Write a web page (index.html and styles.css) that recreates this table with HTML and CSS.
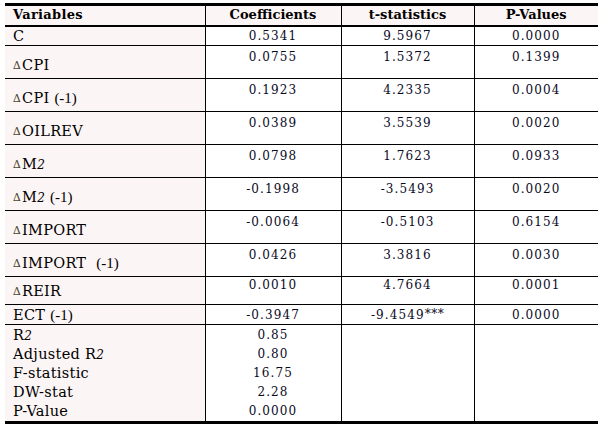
FILE: index.html
```html
<!DOCTYPE html>
<html>
<head>
<meta charset="utf-8">
<link rel="stylesheet" href="styles.css">
</head>
<body>
<table class="reg">
  <colgroup>
    <col class="c1"><col class="c2"><col class="c3"><col class="c4">
  </colgroup>
  <thead>
    <tr class="head">
      <th class="lab">Variables</th>
      <th>Coefficients</th>
      <th>t-statistics</th>
      <th>P-Values</th>
    </tr>
  </thead>
  <tbody>
    <tr class="short">
      <td class="lab">C</td>
      <td class="num">0.5341</td><td class="num">9.5967</td><td class="num">0.0000</td>
    </tr>
    <tr class="tall">
      <td class="lab"><span class="d">∆</span>CPI</td>
      <td class="num">0.0755</td><td class="num">1.5372</td><td class="num">0.1399</td>
    </tr>
    <tr class="tall">
      <td class="lab"><span class="d">∆</span>CPI <span class="lag">(-1)</span></td>
      <td class="num">0.1923</td><td class="num">4.2335</td><td class="num">0.0004</td>
    </tr>
    <tr class="tall">
      <td class="lab"><span class="d">∆</span>OILREV</td>
      <td class="num">0.0389</td><td class="num">3.5539</td><td class="num">0.0020</td>
    </tr>
    <tr class="tall">
      <td class="lab"><span class="d">∆</span>M<span class="two">2</span></td>
      <td class="num">0.0798</td><td class="num">1.7623</td><td class="num">0.0933</td>
    </tr>
    <tr class="tall">
      <td class="lab"><span class="d">∆</span>M<span class="two">2</span> <span class="lag">(-1)</span></td>
      <td class="num">-0.1998</td><td class="num">-3.5493</td><td class="num">0.0020</td>
    </tr>
    <tr class="tall">
      <td class="lab"><span class="d">∆</span>IMPORT</td>
      <td class="num">-0.0064</td><td class="num">-0.5103</td><td class="num">0.6154</td>
    </tr>
    <tr class="tall">
      <td class="lab"><span class="d">∆</span>IMPORT &nbsp;<span class="lag">(-1)</span></td>
      <td class="num">0.0426</td><td class="num">3.3816</td><td class="num">0.0030</td>
    </tr>
    <tr class="mid">
      <td class="lab"><span class="d">∆</span>REIR</td>
      <td class="num">0.0010</td><td class="num">4.7664</td><td class="num">0.0001</td>
    </tr>
    <tr class="short">
      <td class="lab">ECT <span class="lag">(-1)</span></td>
      <td class="num">-0.3947</td><td class="num">-9.4549<span class="ast">***</span></td><td class="num">0.0000</td>
    </tr>
    <tr class="stats">
      <td class="lab stacklab">
        <div>R<span class="two">2</span></div>
        <div>Adjusted R<span class="two">2</span></div>
        <div>F-statistic</div>
        <div>DW-stat</div>
        <div>P-Value</div>
      </td>
      <td class="stacknum">
        <div>0.85</div>
        <div>0.80</div>
        <div>16.75</div>
        <div>2.28</div>
        <div>0.0000</div>
      </td>
      <td class="empty"></td>
      <td class="empty"></td>
    </tr>
  </tbody>
</table>
</body>
</html>
```

FILE: styles.css
```css
html, body {
  margin: 0;
  padding: 0;
  background: #ffffff;
}

.reg {
  border-collapse: collapse;
  margin: 3px 0 0 5px;
  width: 593px;
  table-layout: fixed;
  border-top: 3px solid #000;
  border-bottom: 3px solid #000;
  font-family: "DejaVu Serif", "Liberation Serif", serif;
  color: #000;
}

.c1 { width: 200px; }
.c2 { width: 136px; }
.c3 { width: 133px; }
.c4 { width: 124px; }

th, td {
  box-sizing: border-box;
  padding: 0;
  line-height: 16px;
}

.head th {
  height: 21px;
  font-size: 13px;
  font-weight: bold;
  text-align: center;
  vertical-align: middle;
  background: #fcf5f5;
  border-bottom: 2px solid #000;
  border-left: 1px solid #000;
}

.head th.lab {
  text-align: left;
  padding-left: 8px;
  border-left: none;
  letter-spacing: 0.3px;
}

td {
  border-bottom: 1px solid #000;
  border-left: 1px solid #000;
  overflow: hidden;
  white-space: nowrap;
}

td.lab {
  border-left: none;
  background: #fcf5f5;
  padding-left: 8px;
  font-size: 14.5px;
  letter-spacing: 0.3px;
  text-align: left;
}

td.num {
  font-size: 12px;
  letter-spacing: 1.1px;
  text-align: center;
  color: #0a0a1e;
}

.short td { height: 20px; vertical-align: middle; }
.short td.lab { padding-top: 1px; }

.tall td { height: 33px; }
.tall td.num { vertical-align: top; padding-top: 3px; }
.tall td.lab { vertical-align: bottom; padding-bottom: 4px; }

.mid td { height: 28px; }
.mid td.num { vertical-align: top; padding-top: 0; }
.mid td.lab { vertical-align: bottom; padding-bottom: 4px; }

.d {
  font-size: 11px;
  color: #4a4430;
  margin-right: 1px;
  vertical-align: 1px;
}

.two {
  font-style: italic;
  font-size: 12px;
}

.lag {
  font-family: "Liberation Serif", serif;
  font-size: 15px;
  letter-spacing: 0;
}

.ast {
  font-size: 12px;
  letter-spacing: 0.5px;
  vertical-align: 1px;
}

.stats td {
  vertical-align: top;
  border-bottom: none;
}

.stats td.stacklab {
  padding-top: 1px;
}

.stacklab div {
  height: 19px;
  line-height: 19px;
  font-size: 14.5px;
}

td.stacknum {
  padding-top: 1px;
  text-align: center;
}

.stacknum div {
  height: 19px;
  line-height: 19px;
  font-size: 12px;
  letter-spacing: 1.1px;
  color: #0a0a1e;
}
```
